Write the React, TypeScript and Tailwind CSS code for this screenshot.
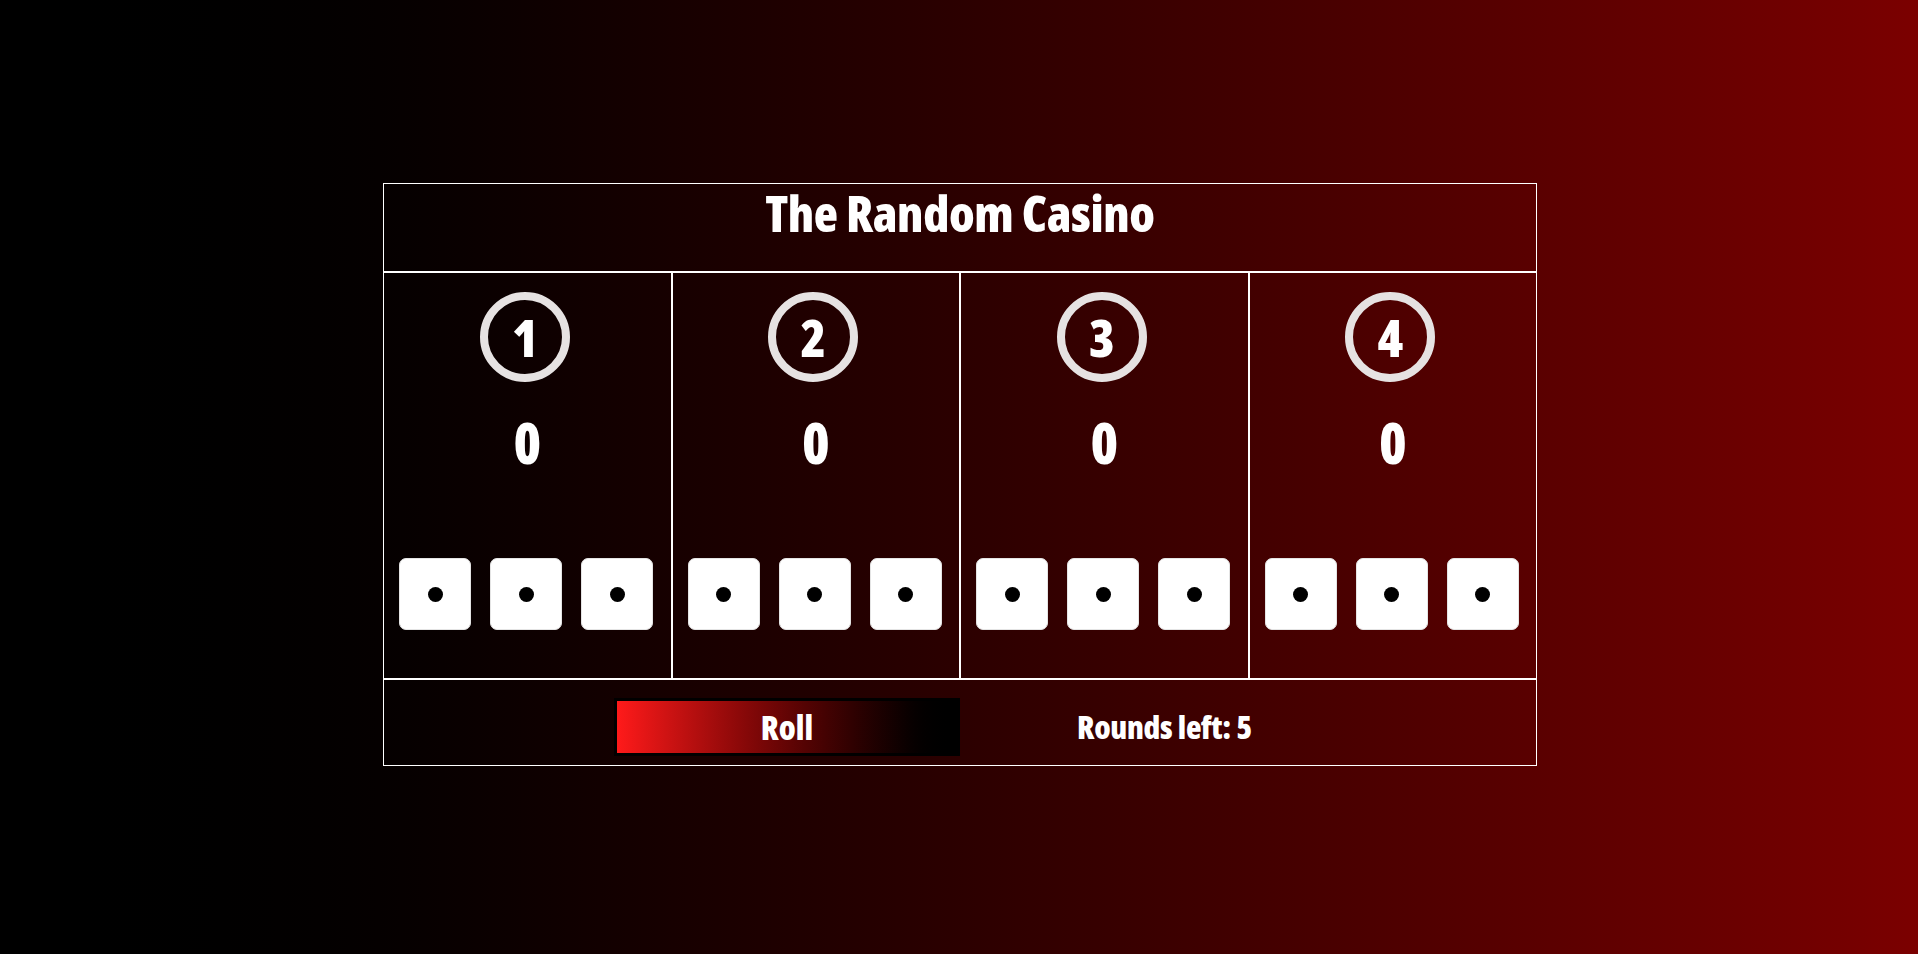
const font = "font-['Open_Sans',sans-serif] font-[800] [font-stretch:75%]";

function Die() {
  return (
    <div className="flex h-[72px] w-[72px] items-center justify-center rounded-[7px] border border-[#e4e4e4] bg-white">
      <div className="h-[15px] w-[15px] rounded-full bg-black" />
    </div>
  );
}

function Player({ n }: { n: number }) {
  return (
    <div className="flex h-[407px] flex-1 flex-col items-center border border-white pt-[19px]">
      <div className="mr-[5px] flex h-[90px] w-[90px] items-center justify-center rounded-full border-[8px] border-[#e6e2e2]">
        <span className={`${font} text-[52px] leading-[52px] text-white`}>{n}</span>
      </div>
      <div className={`${font} mt-[32px] text-[56px] leading-[56px] text-white`}>0</div>
      <div className="mt-[88px] flex w-full gap-[19px] pl-[15px]">
        <Die />
        <Die />
        <Die />
      </div>
    </div>
  );
}

export default function App() {
  return (
    <div className="h-[954px] w-full overflow-hidden bg-gradient-to-r from-black to-[#7b0000] pt-[183px]">
      <div className="ml-[383px] w-[1154px]">
        <div className="flex h-[89px] justify-center border border-white pt-[4px]">
          <h1 className={`${font} text-[50px] leading-[50px] tracking-[-0.4px] text-white`}>
            The Random Casino
          </h1>
        </div>
        <div className="flex">
          <Player n={1} />
          <Player n={2} />
          <Player n={3} />
          <Player n={4} />
        </div>
        <div className="flex h-[87px] items-start border border-white pl-[230px] pt-[18px]">
          <button
            className={`${font} flex h-[58px] w-[346px] items-center justify-center border-[3px] border-black bg-gradient-to-r from-[#ff1a1a] to-black text-[33px] leading-none text-white`}
          >
            Roll
          </button>
          <div className={`${font} ml-[117px] flex h-[58px] items-center text-[32px] leading-none tracking-[-0.3px] text-white`}>
            Rounds left: 5
          </div>
        </div>
      </div>
    </div>
  );
}
